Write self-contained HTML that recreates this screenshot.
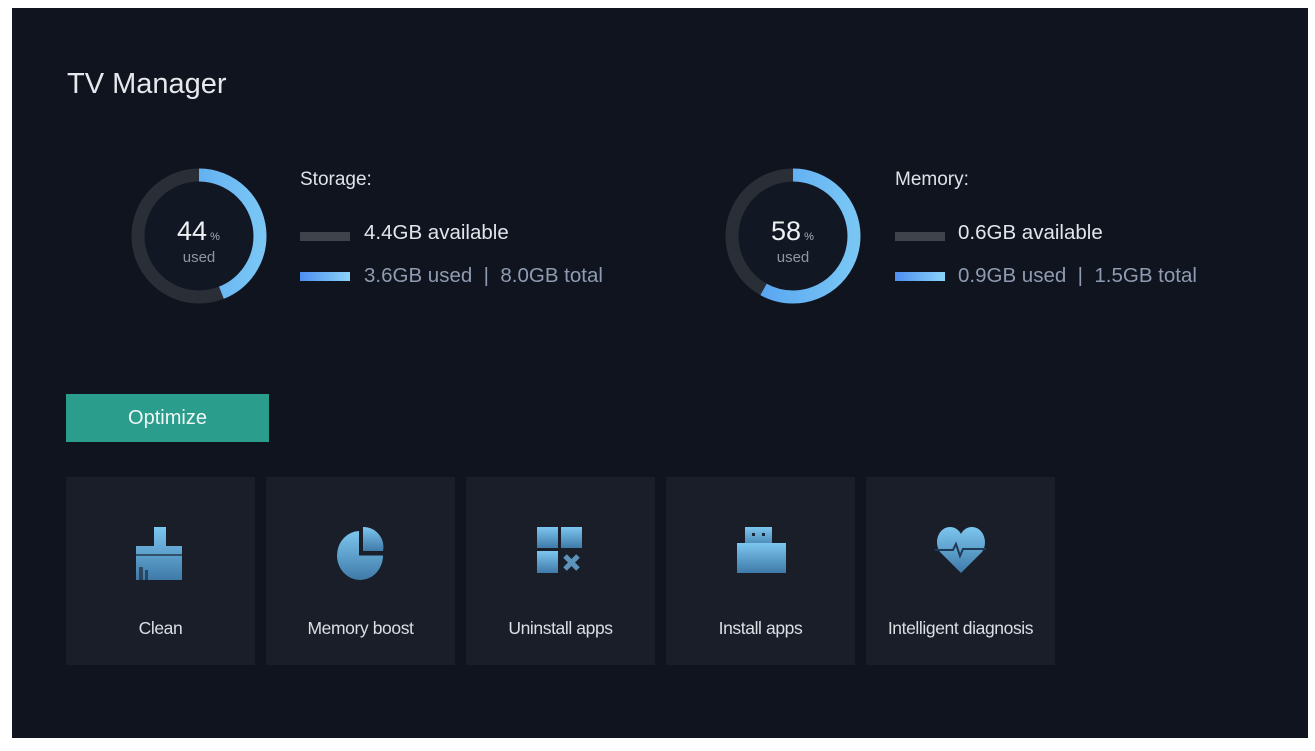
<!DOCTYPE html>
<html><head><meta charset="utf-8"><style>
*{margin:0;padding:0;box-sizing:border-box}
body{width:1315px;height:751px;background:#fff;position:relative;overflow:hidden;font-family:"Liberation Sans",sans-serif}
#scr{position:absolute;left:12px;top:8px;width:1296px;height:730px;background:#0f141f}
.a{position:absolute;white-space:nowrap}
.t{color:#e6e8ec}
.lbl{font-size:19px;color:#dfe2e7}
.val{font-size:20.5px}
.bar{position:absolute;width:50px;height:9px}
.tile{position:absolute;top:477px;width:189px;height:188px;background:#191e29}
.tile .n{position:absolute;left:0;right:0;top:141px;text-align:center;font-size:17.5px;color:#dcdfe4;letter-spacing:-0.4px}
.tile svg{position:absolute;left:68px;top:49px}
</style></head><body>
<div id="scr"></div>
<div class="a t" style="left:67px;top:68px;font-size:29px">TV Manager</div>

<svg class="a" style="left:130px;top:167px" width="138" height="138">
<defs><linearGradient id="bg" x1="0" y1="0" x2="0" y2="1"><stop offset="0" stop-color="#4f9cf0"/><stop offset="1" stop-color="#79c6f5"/></linearGradient></defs>
<circle cx="69" cy="69" r="61" fill="#121823" stroke="#2a2f37" stroke-width="13"/>
<circle cx="69" cy="69" r="61" fill="none" stroke="url(#bg)" stroke-width="13" stroke-dasharray="168.6 400" transform="rotate(-90 69 69)"/>
<text x="62" y="73" text-anchor="middle" font-size="27" fill="#eef0f3" font-family="Liberation Sans">44</text>
<text x="85" y="73" text-anchor="middle" font-size="11" fill="#aab0b8" font-family="Liberation Sans">%</text>
<text x="69" y="95" text-anchor="middle" font-size="15" fill="#8e96a2" font-family="Liberation Sans">used</text>
</svg>
<div class="a lbl" style="left:300px;top:169px">Storage:</div>
<div class="bar" style="left:300px;top:232px;background:#3f434b"></div>
<div class="a val" style="left:364px;top:221px;color:#e2e5ea">4.4GB available</div>
<div class="bar" style="left:300px;top:272px;background:linear-gradient(90deg,#4d8ff0,#8cd3f7)"></div>
<div class="a val" style="left:364px;top:264px;color:#8f9bb0">3.6GB used &nbsp;|&nbsp; 8.0GB total</div>

<svg class="a" style="left:724px;top:167px" width="138" height="138">
<circle cx="69" cy="69" r="61" fill="#121823" stroke="#2a2f37" stroke-width="13"/>
<circle cx="69" cy="69" r="61" fill="none" stroke="url(#bg)" stroke-width="13" stroke-dasharray="222.3 400" transform="rotate(-90 69 69)"/>
<text x="62" y="73" text-anchor="middle" font-size="27" fill="#eef0f3" font-family="Liberation Sans">58</text>
<text x="85" y="73" text-anchor="middle" font-size="11" fill="#aab0b8" font-family="Liberation Sans">%</text>
<text x="69" y="95" text-anchor="middle" font-size="15" fill="#8e96a2" font-family="Liberation Sans">used</text>
</svg>
<div class="a lbl" style="left:895px;top:169px">Memory:</div>
<div class="bar" style="left:895px;top:232px;background:#3f434b"></div>
<div class="a val" style="left:958px;top:221px;color:#e2e5ea">0.6GB available</div>
<div class="bar" style="left:895px;top:272px;background:linear-gradient(90deg,#4d8ff0,#8cd3f7)"></div>
<div class="a val" style="left:958px;top:264px;color:#8f9bb0">0.9GB used &nbsp;|&nbsp; 1.5GB total</div>

<div class="a" style="left:66px;top:394px;width:203px;height:48px;background:#2a9d8c;color:#f0f7f6;font-size:20px;text-align:center;line-height:48px">Optimize</div>

<svg width="0" height="0" style="position:absolute"><defs><linearGradient id="ig" x1="0" y1="0" x2="0" y2="1"><stop offset="0" stop-color="#7cc6ef"/><stop offset="1" stop-color="#3f7aa8"/></linearGradient></defs></svg>

<div class="tile" style="left:66px">
<svg width="54" height="58" viewBox="0 0 54 58"><path fill="url(#ig)" d="M20 1h12v19h16v34H2V20h18z"/><path fill="#191e29" d="M2 28h46v2H2zM5 41h4v13H5zM11 44h3v10h-3z" opacity=".6"/></svg>
<div class="n">Clean</div></div>
<div class="tile" style="left:266px">
<svg width="54" height="58" viewBox="0 0 54 58"><path fill="url(#ig)" d="M25 5a23 24.5 0 1 0 24 24.5H25z"/><path fill="url(#ig)" d="M29 1a20 20 0 0 1 20 24H29z"/></svg>
<div class="n">Memory boost</div></div>
<div class="tile" style="left:466px">
<svg width="54" height="58" viewBox="0 0 54 58"><rect x="3" y="1" width="21" height="21" fill="url(#ig)"/><rect x="27" y="1" width="21" height="21" fill="url(#ig)"/><rect x="3" y="25" width="21" height="22" fill="url(#ig)"/><path d="M31 30l13 13M44 30L31 43" stroke="#5d93bb" stroke-width="5"/></svg>
<div class="n">Uninstall apps</div></div>
<div class="tile" style="left:666px">
<svg width="54" height="58" viewBox="0 0 54 58"><rect x="11" y="1" width="27" height="22" fill="url(#ig)"/><rect x="18" y="7" width="3" height="3" fill="#1b2a3a"/><rect x="28" y="7" width="3" height="3" fill="#1b2a3a"/><rect x="3" y="17" width="49" height="30" fill="url(#ig)"/></svg>
<div class="n">Install apps</div></div>
<div class="tile" style="left:866px">
<svg width="56" height="58" viewBox="0 0 56 58"><path fill="url(#ig)" d="M27 47L6 26C-1 16 5 1 16 1c5 0 9 3 11 7 2-4 6-7 11-7 11 0 17 15 10 25z"/><path d="M1 24h18l3-6 4 12 3-7h23" fill="none" stroke="#1f3a55" stroke-width="2"/></svg>
<div class="n">Intelligent diagnosis</div></div>
</body></html>
